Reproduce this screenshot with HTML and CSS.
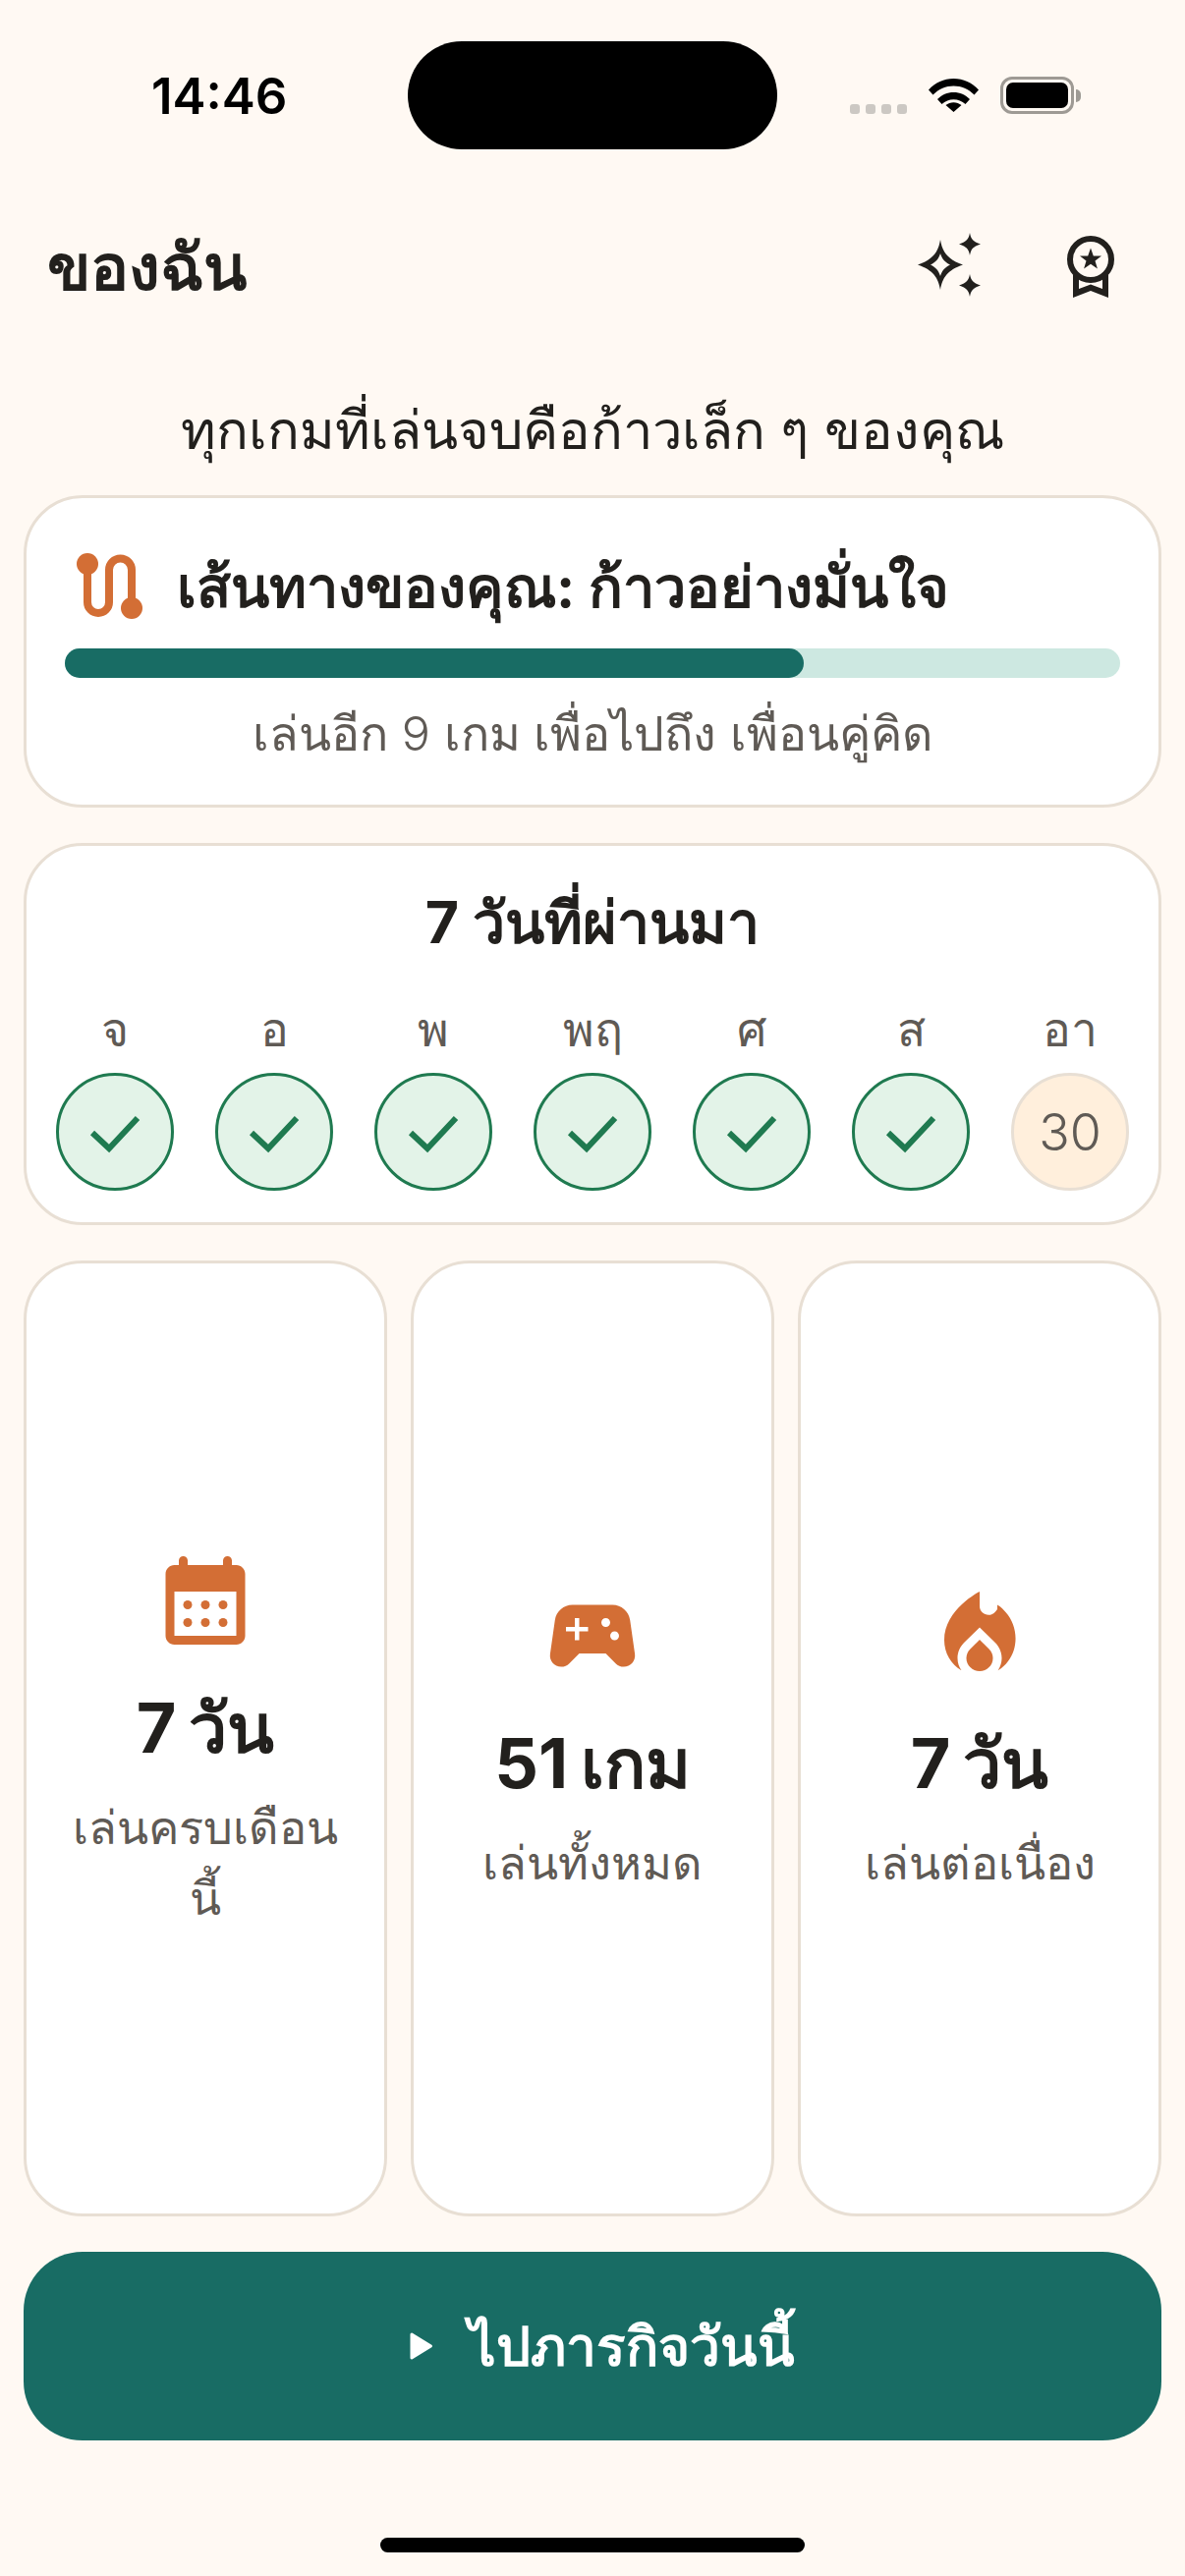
FILE: index.html
```html
<!DOCTYPE html>
<html lang="th">
<head>
<meta charset="utf-8">
<title>ของฉัน</title>
<link rel="stylesheet" href="styles.css">
</head>
<body>
<div class="page">
  <div class="island"></div>
  <div class="status">
    <span class="time">14:46</span>
    <div class="status-right">
      <div class="cell"><i></i><i></i><i></i><i></i></div>
      <svg class="wifi" viewBox="0 0 51 37"><path d="M0 14.5C7 7 15.500 3 25.500 3S44 7 51 14.500L46.500 19.500C40.500 13.500 33.500 10.500 25.500 10.500S10.500 13.500 4.500 19.500Z M9 24C13.500 19.500 19 17 25.500 17S37.500 19.500 42 24L37.500 29C34 25.800 30 24.200 25.500 24.200S17 25.800 13.500 29Z M17.500 30C19.700 28.300 22.500 27.200 25.500 27.200S31.300 28.300 33.500 30L25.500 37Z" transform="translate(0 -2)"/></svg>
      <div class="battery"><div class="battery-body"><div class="battery-level"></div></div><div class="battery-tip"></div></div>
    </div>
  </div>

  <header class="header">
    <h1 class="title">ของฉัน</h1>
    <div class="header-icons">
      <svg class="hicon" viewBox="0 0 72 72"><path fill-rule="evenodd" d="M27 8C29 20 34 28 50 33.500C34 39 29 47 27 59C25 47 20 39 4 33.500C20 28 25 20 27 8ZM27 22C25.500 27 22.500 31 17 33.500C22.500 36 25.500 40 27 45C28.500 40 31.500 36 37 33.500C31.500 31 28.500 27 27 22Z"/><path d="M57 1C58 7 60 10 68 12.500C60 15 58 18 57 24C56 18 54 15 46 12.500C54 10 56 7 57 1Z"/><path d="M57 43C58 49 60 52 68 54.500C60 57 58 60 57 66C56 60 54 57 46 54.500C54 52 56 49 57 43Z"/></svg>
      <svg class="hicon" viewBox="0 0 72 72"><circle cx="36" cy="28" r="21" fill="none" stroke="#22201D" stroke-width="6"/><path d="M36 16.500L38.800 24.500L47 24.600L40.500 29.600L42.900 37.600L36 32.800L29.100 37.600L31.500 29.600L25 24.600L33.200 24.500Z"/><path d="M18 44V67L36 60L54 67V44H48V58L36 53.500L24 58V44Z"/></svg>
    </div>
  </header>

  <p class="tagline">ทุกเกมที่เล่นจบคือก้าวเล็ก ๆ ของคุณ</p>

  <section class="card journey">
    <div class="journey-head">
      <svg class="route" viewBox="0 0 72 72"><path d="M13 13V52A11 11 0 0 0 35 52V19A11.500 11.500 0 0 1 58 19V58" fill="none" stroke="#D36E35" stroke-width="8"/><circle cx="13" cy="13" r="11" fill="#D36E35"/><circle cx="58" cy="58" r="11" fill="#D36E35"/></svg>
      <h2 class="journey-title">เส้นทางของคุณ: ก้าวอย่างมั่นใจ</h2>
    </div>
    <div class="track"><div class="fill" style="width:70%"></div></div>
    <p class="journey-note">เล่นอีก 9 เกม เพื่อไปถึง เพื่อนคู่คิด</p>
  </section>

  <section class="card week">
    <h2 class="week-title">7 วันที่ผ่านมา</h2>
    <div class="days">
      <div class="day"><span class="day-label">จ</span><span class="dot done"><svg viewBox="0 0 60 60"><path d="M7 31L24 47L53 16" fill="none" stroke="#1F7A50" stroke-width="6"/></svg></span></div>
      <div class="day"><span class="day-label">อ</span><span class="dot done"><svg viewBox="0 0 60 60"><path d="M7 31L24 47L53 16" fill="none" stroke="#1F7A50" stroke-width="6"/></svg></span></div>
      <div class="day"><span class="day-label">พ</span><span class="dot done"><svg viewBox="0 0 60 60"><path d="M7 31L24 47L53 16" fill="none" stroke="#1F7A50" stroke-width="6"/></svg></span></div>
      <div class="day"><span class="day-label">พฤ</span><span class="dot done"><svg viewBox="0 0 60 60"><path d="M7 31L24 47L53 16" fill="none" stroke="#1F7A50" stroke-width="6"/></svg></span></div>
      <div class="day"><span class="day-label">ศ</span><span class="dot done"><svg viewBox="0 0 60 60"><path d="M7 31L24 47L53 16" fill="none" stroke="#1F7A50" stroke-width="6"/></svg></span></div>
      <div class="day"><span class="day-label">ส</span><span class="dot done"><svg viewBox="0 0 60 60"><path d="M7 31L24 47L53 16" fill="none" stroke="#1F7A50" stroke-width="6"/></svg></span></div>
      <div class="day"><span class="day-label">อา</span><span class="dot today">30</span></div>
    </div>
  </section>

  <section class="stats">
    <div class="card stat">
      <svg class="stat-icon" viewBox="0 0 24 24"><path d="M19 4h-1V3a1 1 0 0 0-2 0v1H8V3a1 1 0 0 0-2 0v1H5c-1.100 0-2 .9-2 2v14c0 1.100.9 2 2 2h14c1.100 0 2-.9 2-2V6c0-1.100-.9-2-2-2zm0 16H5V10h14v10z"/><circle cx="8" cy="13" r="1"/><circle cx="12" cy="13" r="1"/><circle cx="16" cy="13" r="1"/><circle cx="8" cy="17" r="1"/><circle cx="12" cy="17" r="1"/><circle cx="16" cy="17" r="1"/></svg>
      <div class="stat-value">7 วัน</div>
      <div class="stat-label">เล่นครบเดือนนี้</div>
    </div>
    <div class="card stat">
      <svg class="stat-icon" viewBox="0 0 24 24"><path d="M21.580 16.090l-1.090-7.660C20.210 6.460 18.520 5 16.530 5H7.470C5.480 5 3.790 6.460 3.510 8.430l-1.090 7.660C2.200 17.630 3.390 19 4.940 19c.68 0 1.320-.27 1.800-.75L9 16h6l2.250 2.250c.48.48 1.130.75 1.800.75 1.560 0 2.750-1.370 2.530-2.910zM11 11H9v2H8v-2H6v-1h2V8h1v2h2v1zm4-1c-.55 0-1-.45-1-1s.45-1 1-1 1 .45 1 1-.45 1-1 1zm2 3c-.55 0-1-.45-1-1s.45-1 1-1 1 .45 1 1-.45 1-1 1z"/></svg>
      <div class="stat-value">51 เกม</div>
      <div class="stat-label">เล่นทั้งหมด</div>
    </div>
    <div class="card stat">
      <svg class="stat-icon" viewBox="0 0 24 24"><path d="M12 12.900l-2.130 2.090C9.310 15.550 9 16.280 9 17.060 9 18.680 10.350 20 12 20s3-1.320 3-2.940c0-.78-.31-1.520-.87-2.070L12 12.900z"/><path d="M16 6l-.44.55C14.380 8.020 12 7.190 12 5.300V2S4 6 4 13c0 2.920 1.560 5.470 3.890 6.860-.56-.79-.89-1.760-.89-2.800 0-1.320.52-2.560 1.470-3.500L12 10.100l3.530 3.470c.95.94 1.470 2.180 1.470 3.500 0 1.030-.33 1.990-.86 2.780 1.740-1.050 3.050-2.750 3.630-4.750.86-2.970.11-6.120-1.830-8.370-.6-.7-1.200-1.320-1.940-1.730z"/></svg>
      <div class="stat-value">7 วัน</div>
      <div class="stat-label">เล่นต่อเนื่อง</div>
    </div>
  </section>

  <button class="cta">
    <svg class="play" viewBox="0 0 24 30"><path d="M2 3L21.500 15L2 27Z" stroke="#fff" stroke-width="3" stroke-linejoin="round" fill="#fff"/></svg>
    <span>ไปภารกิจวันนี้</span>
  </button>

  <div class="home-zone"><div class="home-bar"></div></div>
</div>
</body>
</html>
```

FILE: styles.css
```css
* { box-sizing: border-box; margin: 0; padding: 0; }
html, body { width: 1206px; height: 2622px; background: #FFF9F3; overflow: hidden; }
body { font-family: "Inter", "Noto Sans", "DejaVu Sans", sans-serif; color: #22201D; }
.page { position: relative; width: 1206px; height: 2622px; display: flex; flex-direction: column; padding: 0 24px; }

.island { position: absolute; left: 415px; top: 42px; width: 376px; height: 110px; border-radius: 55px; background: #000; }
.status { height: 176px; display: flex; justify-content: space-between; align-items: flex-start; padding: 70px 0 0 130px; }
.time { font-size: 51px; line-height: 56px; font-weight: 600; color: #000; }
.status-right { display: flex; align-items: flex-end; height: 46px; margin-right: 82px; }
.cell { display: flex; gap: 6px; margin-right: 22px; }
.cell i { width: 10px; height: 10px; border-radius: 3px; background: #CCC8C3; }
.wifi { width: 51px; height: 37px; fill: #000; margin-right: 22px; }
.battery { display: flex; align-items: center; }
.battery-body { width: 75px; height: 38px; border: 3px solid #9E9A94; border-radius: 12px; padding: 3px; }
.battery-level { width: 100%; height: 100%; background: #000; border-radius: 7px; }
.battery-tip { width: 5px; height: 13px; margin-left: 2px; background: #9E9A94; border-radius: 0 6px 6px 0; }

.header { height: 196px; display: flex; justify-content: space-between; align-items: center; padding: 0 0 4px 24px; }
.title { font-size: 65px; font-weight: 700; line-height: 84px; }
.header-icons { display: flex; gap: 72px; margin-right: 36px; }
.hicon { width: 72px; height: 72px; fill: #22201D; }

.tagline { text-align: center; font-size: 54.3px; line-height: 70px; height: 132px; padding-top: 30px; font-weight: 350; }

.card { background: #fff; border: 3px solid #E8DFD4; border-radius: 60px; }
.journey { height: 318px; padding: 45px 39px 0; margin-bottom: 36px; }
.journey-head { display: flex; align-items: center; gap: 32px; padding-left: 10px; height: 90px; }
.route { width: 72px; height: 72px; flex: none; }
.journey-title { font-size: 57.6px; font-weight: 700; line-height: 90px; white-space: nowrap; }
.track { height: 30px; margin-top: 18px; border-radius: 15px; background: #CDE8E1; }
.fill { height: 100%; border-radius: 15px; background: #186C64; }
.journey-note { text-align: center; font-size: 48.5px; line-height: 64px; margin-top: 25px; color: #5F5A55; font-weight: 300; }

.week { height: 389px; padding: 36px 30px 0; margin-bottom: 36px; }
.week-title { text-align: center; font-size: 59px; font-weight: 700; line-height: 84px; }
.days { display: flex; justify-content: space-between; margin-top: 37px; }
.day { width: 120px; display: flex; flex-direction: column; align-items: center; gap: 14px; }
.day-label { font-size: 48px; line-height: 60px; color: #5F5A55; white-space: nowrap; font-weight: 300; }
.dot { width: 120px; height: 120px; border-radius: 50%; display: flex; align-items: center; justify-content: center; }
.dot.done { background: #E3F3E8; border: 3px solid #1F7A50; }
.dot.done svg { width: 60px; height: 60px; }
.dot.today { background: #FFEFDC; border: 3px solid #E8DFD4; font-size: 52px; font-weight: 300; color: #5F5A55; }

.stats { flex: 1; display: grid; grid-template-columns: repeat(3, 1fr); gap: 24px; margin-bottom: 36px; }
.stat { display: flex; flex-direction: column; align-items: center; justify-content: center; text-align: center; padding: 3px 36px 0; }
.stat-icon { width: 108px; height: 108px; fill: #D36E35; flex: none; }
.stat-value { font-size: 70px; font-weight: 700; line-height: 100px; margin-top: 26px; white-space: nowrap; word-spacing: -4px; }
.stat-label { font-size: 47px; line-height: 72px; color: #5F5A55; margin-top: 15px; font-weight: 300; }

.cta { height: 192px; width: 100%; flex: none; border: 0; border-radius: 60px; background: #186C64; color: #fff; display: flex; align-items: center; justify-content: center; gap: 36px; padding-left: 20px; font-family: inherit; font-size: 55px; font-weight: 700; }
.play { width: 24px; height: 30px; flex: none; }

.home-zone { height: 138px; display: flex; justify-content: center; padding-top: 99px; }
.home-bar { width: 432px; height: 15px; border-radius: 8px; background: #000; }
```
